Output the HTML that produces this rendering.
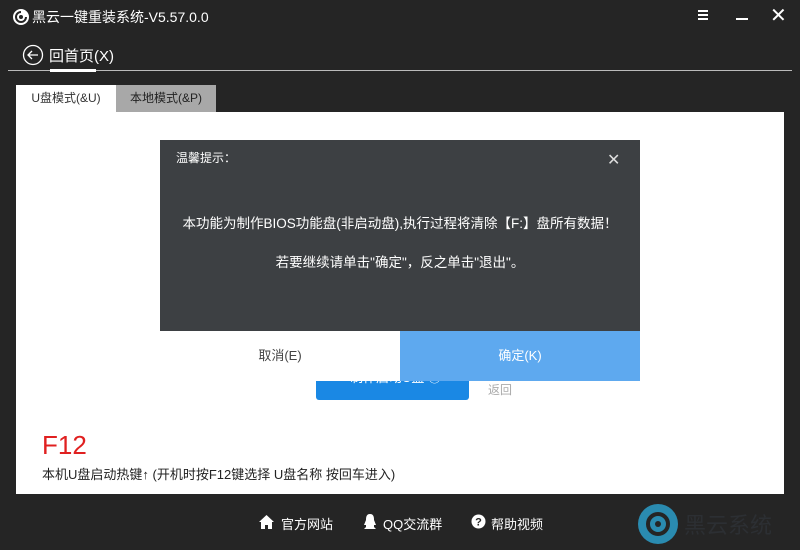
<!DOCTYPE html>
<html><head><meta charset="utf-8"><style>
*{margin:0;padding:0;box-sizing:border-box}
body{width:800px;height:550px;background:#252525;position:relative;overflow:hidden;font-family:"Liberation Sans","Noto Sans CJK SC",sans-serif;color:#fff}
.a{position:absolute;white-space:nowrap}
</style></head><body>
<svg class="a" style="left:12px;top:8px" width="18" height="18" viewBox="0 0 18 18"><circle cx="9" cy="9" r="8" fill="#fff"/><path d="M9 4a5 5 0 1 0 5 5" stroke="#252525" stroke-width="2" fill="none"/><circle cx="9" cy="9" r="2" fill="#252525"/></svg>
<div class="a" style="left:32px;top:7px;font-size:14px">黑云一键重装系统-V5.57.0.0</div>
<div class="a" style="left:698px;top:10px;width:10px;height:2px;background:#fff;box-shadow:0 4px 0 #fff,0 8px 0 #fff"></div>
<div class="a" style="left:736px;top:18px;width:12px;height:2px;background:#fff"></div>
<div class="a" style="left:770px;top:2px;font-size:20px;line-height:28px">✕</div>
<svg class="a" style="left:22px;top:44px" width="22" height="22" viewBox="0 0 22 22"><circle cx="11" cy="11" r="9.5" stroke="#fff" stroke-width="1.3" fill="none"/><path d="M16 11H6M10 7l-4 4 4 4" stroke="#fff" stroke-width="1.3" fill="none"/></svg>
<div class="a" style="left:49px;top:45px;font-size:15px">回首页(X)</div>
<div class="a" style="left:8px;top:70px;width:784px;height:1px;background:#bbb"></div>
<div class="a" style="left:50px;top:69px;width:46px;height:3px;background:#fff"></div>
<div class="a" style="left:16px;top:85px;width:100px;height:27px;background:#fff;color:#333;font-size:12px;text-align:center;line-height:27px">U盘模式(&amp;U)</div>
<div class="a" style="left:116px;top:85px;width:100px;height:27px;background:#a8a8a8;color:#222;font-size:12px;text-align:center;line-height:27px">本地模式(&amp;P)</div>
<div class="a" style="left:16px;top:112px;width:768px;height:382px;background:#fff"></div>
<div class="a" style="left:316px;top:370px;width:153px;height:30px;background:#1a88e4;border-radius:3px;overflow:hidden"><div style="position:absolute;left:34px;top:1px;font-size:13px;line-height:14px">制作启动U盘 ⓪</div></div>
<div class="a" style="left:488px;top:381px;font-size:12px;color:#aaa">返回</div>
<div class="a" style="left:42px;top:430px;font-size:26px;color:#e02020">F12</div>
<div class="a" style="left:42px;top:464px;font-size:13px;color:#222">本机U盘启动热键↑ (开机时按F12键选择 U盘名称 按回车进入)</div>
<div class="a" style="left:160px;top:140px;width:480px;height:191px;background:#3d4043"></div>
<div class="a" style="left:176px;top:149px;font-size:12px">温馨提示：</div>
<div class="a" style="left:607px;top:150px;font-size:16px;color:#ddd">✕</div>
<div class="a" style="left:160px;top:212px;width:480px;text-align:center;font-size:13.5px">本功能为制作BIOS功能盘(非启动盘),执行过程将清除【F:】盘所有数据！</div>
<div class="a" style="left:160px;top:251px;width:480px;text-align:center;font-size:13.5px">若要继续请单击"确定"，反之单击"退出"。</div>
<div class="a" style="left:160px;top:331px;width:240px;height:50px;background:#fff;color:#444;font-size:13px;text-align:center;line-height:50px">取消(E)</div>
<div class="a" style="left:400px;top:331px;width:240px;height:50px;background:#5ea9ef;color:#fff;font-size:13px;text-align:center;line-height:50px">确定(K)</div>
<svg class="a" style="left:259px;top:515px" width="15" height="14" viewBox="0 0 15 14"><path d="M7.5 0L0 7h2v7h4v-4h3v4h4V7h2z" fill="#fff"/></svg>
<div class="a" style="left:281px;top:514px;font-size:13px">官方网站</div>
<svg class="a" style="left:363px;top:514px" width="14" height="16" viewBox="0 0 14 16"><path d="M7 0C3 0 3 4 3 6L1 11l2 0 0 2-2 2h12l-2-2 0-2 2 0-2-5C11 4 11 0 7 0z" fill="#fff"/></svg>
<div class="a" style="left:383px;top:514px;font-size:13px">QQ交流群</div>
<svg class="a" style="left:471px;top:514px" width="15" height="15" viewBox="0 0 15 15"><circle cx="7.5" cy="7.5" r="7" fill="#fff"/><text x="7.5" y="11.5" text-anchor="middle" font-size="11" font-weight="bold" fill="#252525" font-family="Liberation Sans">?</text></svg>
<div class="a" style="left:491px;top:514px;font-size:13px">帮助视频</div>
<svg class="a" style="left:636px;top:502px" width="44" height="44" viewBox="0 0 44 44"><circle cx="22" cy="22" r="20" fill="#2a8bb0"/><circle cx="22" cy="22" r="10" fill="none" stroke="#252525" stroke-width="4"/><circle cx="22" cy="22" r="3" fill="#252525"/></svg>
<div class="a" style="left:684px;top:508px;font-size:22px;color:#2c2f33">黑云系统</div>
</body></html>
